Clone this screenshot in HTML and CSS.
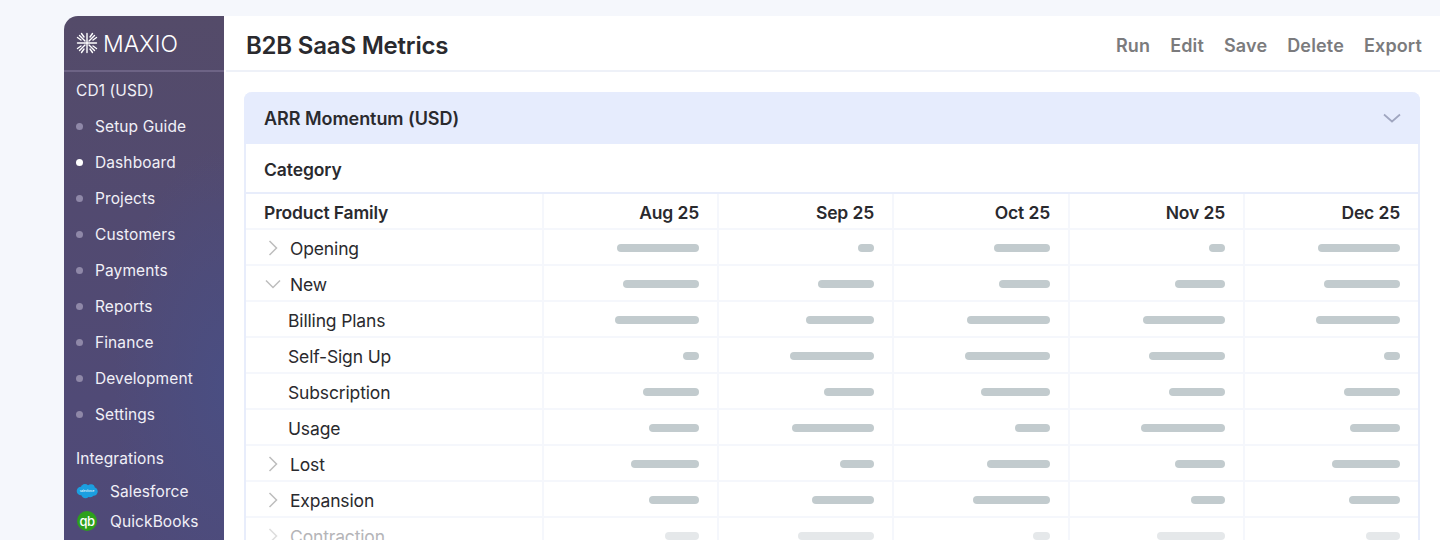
FILE: index.html
```html
<!DOCTYPE html>
<html lang="en">
<head>
<meta charset="utf-8">
<title>B2B SaaS Metrics</title>
<link rel="stylesheet" href="styles.css">
</head>
<body>
<div class="app">
  <aside class="sidebar">
    <div class="brand">
      <svg class="brand-mark" viewBox="0 0 22 22" fill="none" stroke="#fff" stroke-width="1.400" stroke-linecap="round">
        <path d="M11 1.500V20.500M1.500 11H20.500"/>
        <path d="M9 9 3.500 3.500M8 5 5.500 1.500M5 8 1.500 5.500"/>
        <path d="M13 9 18.500 3.500M14 5 16.500 1.500M17 8 20.500 5.500"/>
        <path d="M13 13 18.500 18.500M14 17 16.500 20.500M17 14 20.500 16.500"/>
        <path d="M9 13 3.500 18.500M8 17 5.500 20.500M5 14 1.500 16.500"/>
      </svg>
      <span class="brand-name">MAXIO</span>
    </div>
    <div class="section-title">CD1 (USD)</div>
    <ul class="nav">
      <li class="nav-item"><span class="dot"></span>Setup Guide</li>
      <li class="nav-item"><span class="dot dot-active"></span>Dashboard</li>
      <li class="nav-item"><span class="dot"></span>Projects</li>
      <li class="nav-item"><span class="dot"></span>Customers</li>
      <li class="nav-item"><span class="dot"></span>Payments</li>
      <li class="nav-item"><span class="dot"></span>Reports</li>
      <li class="nav-item"><span class="dot"></span>Finance</li>
      <li class="nav-item"><span class="dot"></span>Development</li>
      <li class="nav-item"><span class="dot"></span>Settings</li>
    </ul>
    <div class="section-title integrations-title">Integrations</div>
    <ul class="integrations">
      <li class="integration">
        <svg class="int-icon" viewBox="0 0 22 16">
          <g fill="#1b9fe0">
            <circle cx="5" cy="8" r="4.300"/>
            <circle cx="9" cy="5.200" r="4.200"/>
            <circle cx="15" cy="5" r="3.800"/>
            <circle cx="17.500" cy="8.500" r="4.200"/>
            <circle cx="9.500" cy="11" r="4.300"/>
            <circle cx="14" cy="10.500" r="3.800"/>
          </g>
          <text class="sf-text" x="11" y="9">salesforce</text>
        </svg>
        Salesforce
      </li>
      <li class="integration">
        <span class="qb-icon">qb</span>
        QuickBooks
      </li>
    </ul>
  </aside>
  <main class="main">
    <header class="topbar">
      <h1 class="page-title">B2B SaaS Metrics</h1>
      <nav class="actions">
        <span class="action">Run</span>
        <span class="action">Edit</span>
        <span class="action">Save</span>
        <span class="action">Delete</span>
        <span class="action">Export</span>
      </nav>
    </header>
    <section class="content">
      <div class="card">
        <div class="card-head">
          <h2 class="card-title">ARR Momentum (USD)</h2>
          <svg class="card-chevron" viewBox="0 0 18 10" fill="none" stroke="#a0a6c0" stroke-width="1.700"><path d="M1 1.500 9 8.500l8-7"/></svg>
        </div>
        <div class="category">Category</div>
        <table class="grid">
          <thead>
            <tr><th>Product Family</th><th class="num">Aug 25</th><th class="num">Sep 25</th><th class="num">Oct 25</th><th class="num">Nov 25</th><th class="num">Dec 25</th></tr>
          </thead>
          <tbody>
            <tr>
              <td class="name"><span class="label"><svg class="chev" viewBox="0 0 12 16" fill="none" stroke="#bdbdbd" stroke-width="1.500"><path d="M2.500 1 9.500 8l-7 7"/></svg>Opening</span></td>
              <td class="num"><i class="bar" style="width:82px"></i></td><td class="num"><i class="bar" style="width:16px"></i></td><td class="num"><i class="bar" style="width:56px"></i></td><td class="num"><i class="bar" style="width:16px"></i></td><td class="num"><i class="bar" style="width:82px"></i></td>
            </tr>
            <tr>
              <td class="name"><span class="label"><svg class="chev chev-down" viewBox="0 0 16 12" fill="none" stroke="#bdbdbd" stroke-width="1.500"><path d="M1 2.500 8 9.500l7-7"/></svg>New</span></td>
              <td class="num"><i class="bar" style="width:76px"></i></td><td class="num"><i class="bar" style="width:56px"></i></td><td class="num"><i class="bar" style="width:51px"></i></td><td class="num"><i class="bar" style="width:50px"></i></td><td class="num"><i class="bar" style="width:76px"></i></td>
            </tr>
            <tr>
              <td class="name child">Billing Plans</td>
              <td class="num"><i class="bar" style="width:84px"></i></td><td class="num"><i class="bar" style="width:68px"></i></td><td class="num"><i class="bar" style="width:83px"></i></td><td class="num"><i class="bar" style="width:82px"></i></td><td class="num"><i class="bar" style="width:84px"></i></td>
            </tr>
            <tr>
              <td class="name child">Self-Sign Up</td>
              <td class="num"><i class="bar" style="width:16px"></i></td><td class="num"><i class="bar" style="width:84px"></i></td><td class="num"><i class="bar" style="width:85px"></i></td><td class="num"><i class="bar" style="width:76px"></i></td><td class="num"><i class="bar" style="width:16px"></i></td>
            </tr>
            <tr>
              <td class="name child">Subscription</td>
              <td class="num"><i class="bar" style="width:56px"></i></td><td class="num"><i class="bar" style="width:50px"></i></td><td class="num"><i class="bar" style="width:69px"></i></td><td class="num"><i class="bar" style="width:56px"></i></td><td class="num"><i class="bar" style="width:56px"></i></td>
            </tr>
            <tr>
              <td class="name child">Usage</td>
              <td class="num"><i class="bar" style="width:50px"></i></td><td class="num"><i class="bar" style="width:82px"></i></td><td class="num"><i class="bar" style="width:35px"></i></td><td class="num"><i class="bar" style="width:84px"></i></td><td class="num"><i class="bar" style="width:50px"></i></td>
            </tr>
            <tr>
              <td class="name"><span class="label"><svg class="chev" viewBox="0 0 12 16" fill="none" stroke="#bdbdbd" stroke-width="1.500"><path d="M2.500 1 9.500 8l-7 7"/></svg>Lost</span></td>
              <td class="num"><i class="bar" style="width:68px"></i></td><td class="num"><i class="bar" style="width:34px"></i></td><td class="num"><i class="bar" style="width:63px"></i></td><td class="num"><i class="bar" style="width:50px"></i></td><td class="num"><i class="bar" style="width:68px"></i></td>
            </tr>
            <tr>
              <td class="name"><span class="label"><svg class="chev" viewBox="0 0 12 16" fill="none" stroke="#bdbdbd" stroke-width="1.500"><path d="M2.500 1 9.500 8l-7 7"/></svg>Expansion</span></td>
              <td class="num"><i class="bar" style="width:50px"></i></td><td class="num"><i class="bar" style="width:62px"></i></td><td class="num"><i class="bar" style="width:77px"></i></td><td class="num"><i class="bar" style="width:34px"></i></td><td class="num"><i class="bar" style="width:51px"></i></td>
            </tr>
            <tr class="faded">
              <td class="name"><span class="label"><svg class="chev" viewBox="0 0 12 16" fill="none" stroke="#bdbdbd" stroke-width="1.500"><path d="M2.500 1 9.500 8l-7 7"/></svg>Contraction</span></td>
              <td class="num"><i class="bar" style="width:34px"></i></td><td class="num"><i class="bar" style="width:76px"></i></td><td class="num"><i class="bar" style="width:17px"></i></td><td class="num"><i class="bar" style="width:68px"></i></td><td class="num"><i class="bar" style="width:34px"></i></td>
            </tr>
          </tbody>
        </table>
      </div>
    </section>
  </main>
</div>
</body>
</html>
```
FILE: styles.css
```css
* { box-sizing: border-box; }
html, body { margin: 0; height: 540px; overflow: hidden; }
body {
  background: #f5f7fc;
  font-family: Inter, "Noto Sans", sans-serif;
  color: #2a2a2e;
}
ul { list-style: none; margin: 0; padding: 0; }
h1, h2 { margin: 0; }

.app {
  display: flex;
  height: 640px;
  margin: 16px 0 0 64px;
  background: #fff;
  border-top-left-radius: 14px;
}

.sidebar {
  flex: 0 0 160px;
  color: #f1f0f7;
  font-size: 15.500px;
  letter-spacing: 0.100px;
  border-top-left-radius: 14px;
  background:
    radial-gradient(ellipse 110px 240px at 100% 58%, #4a4e82 0%, rgba(74, 78, 130, 0) 100%),
    linear-gradient(180deg, #544b69 0%, #524a70 30%, #504a76 60%, #4e4a7a 100%);
}
.brand {
  display: flex;
  align-items: center;
  gap: 5px;
  height: 56px;
  padding: 0 0 0 12px;
  border-bottom: 2px solid #6d6385;
}
.brand-mark { width: 22px; height: 22px; }
.brand-name {
  padding-top: 2px;
  font-size: 23px;
  font-weight: 300;
  letter-spacing: 0;
  color: #fff;
}
.section-title {
  height: 36px;
  line-height: 38px;
  padding-left: 12px;
}
.nav-item {
  display: flex;
  align-items: center;
  height: 36px;
  padding-left: 12px;
}
.dot {
  flex: none;
  width: 7px;
  height: 7px;
  margin-right: 12px;
  border-radius: 50%;
  background: #8f88a8;
}
.dot-active { background: #fff; }
.integrations-title { margin-top: 8px; }
.integration {
  display: flex;
  align-items: center;
  gap: 10px;
  height: 30px;
  padding-left: 12px;
}
.int-icon { width: 22px; height: 16px; margin-right: 2px; }
.sf-text { font-size: 3px; fill: #fff; text-anchor: middle; font-family: Inter, sans-serif; letter-spacing: 0; }
.qb-icon {
  display: flex;
  align-items: center;
  justify-content: center;
  width: 20px;
  height: 20px;
  margin: 0 3px 0 1px;
  border-radius: 50%;
  background: #2ca01c;
  color: #fff;
  font-size: 13px;
  font-weight: 500;
  letter-spacing: -0.500px;
}

.main { flex: 1; min-width: 0; }
.topbar {
  display: flex;
  align-items: center;
  justify-content: space-between;
  height: 56px;
  margin-left: 2px;
  padding: 5px 18px 0 20px;
  border-bottom: 2px solid #eef1f8;
}
.page-title {
  font-size: 24px;
  font-weight: 600;
  letter-spacing: -0.200px;
  color: #2a2a2e;
}
.actions { display: flex; gap: 20px; }
.action {
  font-size: 18px;
  font-weight: 600;
  letter-spacing: 0.150px;
  color: #7b7b7d;
}

.content { padding: 20px 20px 0; }
.card {
  border: 2px solid #e8edfb;
  border-top: 0;
  border-radius: 8px 8px 0 0;
}
.card-head {
  display: flex;
  align-items: center;
  justify-content: space-between;
  height: 52px;
  margin: 0 -2px;
  padding: 0 19px 0 20px;
  background: #e6ecfd;
  border-radius: 8px 8px 0 0;
}
.card-title {
  font-size: 18px;
  font-weight: 600;
  letter-spacing: -0.050px;
  color: #2a2a2e;
}
.card-chevron { width: 18px; height: 10px; }
.category {
  display: flex;
  align-items: center;
  height: 50px;
  padding: 2px 18px 0;
  font-size: 17.500px;
  font-weight: 600;
  letter-spacing: -0.100px;
  border-bottom: 2px solid #e8edfb;
}

.grid {
  width: 100%;
  table-layout: fixed;
  border-collapse: separate;
  border-spacing: 0;
  font-size: 17.500px;
  letter-spacing: -0.150px;
}
.grid th:nth-child(1) { width: 298px; }
.grid th:nth-child(2), .grid th:nth-child(3), .grid th:nth-child(5) { width: 175px; }
.grid th:nth-child(4) { width: 176px; }
.grid th, .grid td {
  height: 36px;
  padding: 0 18px;
  border-right: 2px solid #f5f7fc;
  border-bottom: 2px solid #f5f7fc;
  text-align: left;
  font-weight: 400;
  white-space: nowrap;
}
.grid th { font-weight: 600; padding-top: 2px; }
.grid .name { padding-top: 2px; }
.grid tr > :last-child { border-right: 0; }
.grid .num { text-align: right; }
.grid .child { padding-left: 42px; }
.label { display: flex; align-items: center; }
.chev { width: 12px; height: 16px; margin: 0 11px 0 3px; }
.chev-down { width: 16px; height: 12px; margin: 0 9px 0 1px; }
.bar {
  display: inline-block;
  height: 8px;
  border-radius: 4px;
  background: #c2cbce;
  vertical-align: 2px;
}
.faded td { color: #b5b5b8; }
.faded .bar { background: #e5e8ea; }
.faded .chev { opacity: .5; }
```
